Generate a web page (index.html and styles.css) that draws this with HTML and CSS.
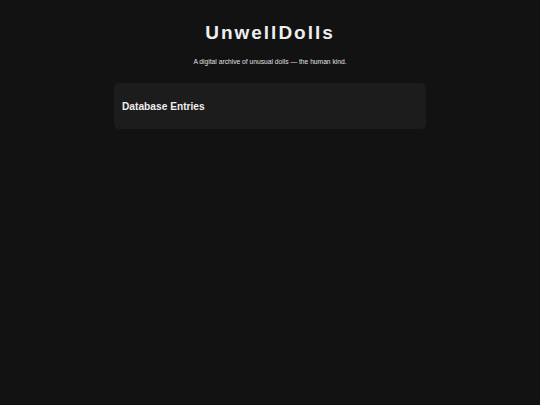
FILE: index.html
```html
<!DOCTYPE html>
<html>
<head>
<meta charset="utf-8">
<link rel="stylesheet" href="styles.css">
</head>
<body>
<header class="hero">
  <h1 class="title">UnwellDolls</h1>
  <p class="tagline">A digital archive of unusual dolls — the human kind.</p>
</header>
<main class="main">
  <section class="card">
    <h2 class="card-title">Database Entries</h2>
  </section>
</main>
</body>
</html>
```
FILE: styles.css
```css
html, body {
  margin: 0;
  padding: 0;
  background: #121212;
  color: #eeeeee;
  font-family: "Liberation Sans", Arial, sans-serif;
}
.hero {
  text-align: center;
  padding-top: 21px;
}
.title {
  margin: 0;
  font-size: 19px;
  font-weight: bold;
  letter-spacing: 2px;
  line-height: 24px;
  color: #eeeeee;
}
.tagline {
  margin: 12px 0 0;
  font-size: 6.7px;
  line-height: 9px;
  color: #e0e0e0;
}
.main {
  display: flex;
  justify-content: center;
  padding-top: 17px;
}
.card {
  width: 312px;
  height: 46px;
  box-sizing: border-box;
  background: #1c1c1c;
  border-radius: 5px;
  padding: 0 8px;
  display: flex;
  align-items: center;
}
.card-title {
  margin: 0;
  font-size: 10.2px;
  font-weight: bold;
  color: #eeeeee;
}
```
